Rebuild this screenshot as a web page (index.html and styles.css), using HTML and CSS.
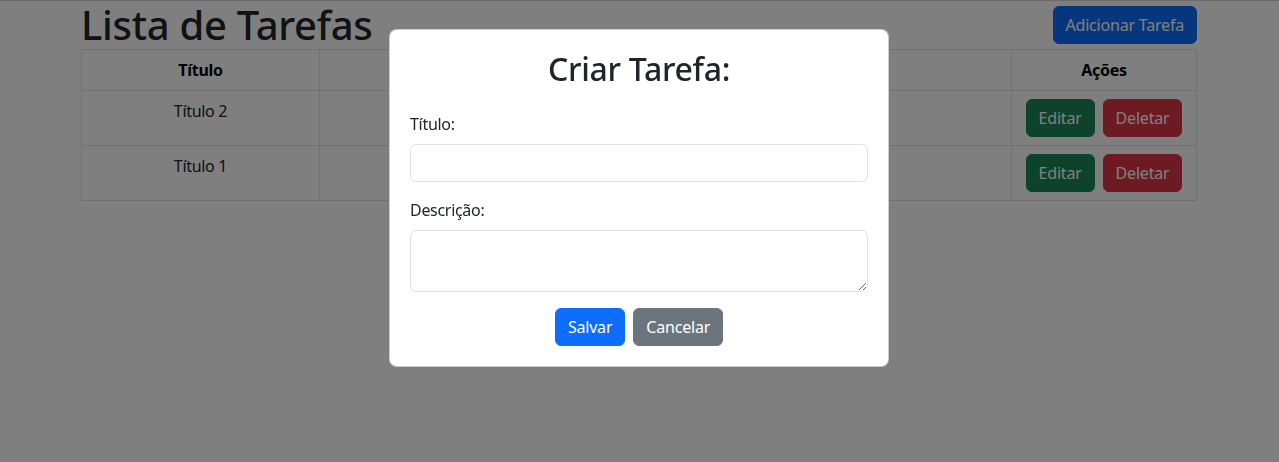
FILE: index.html
```html
<!DOCTYPE html>
<html lang="pt-BR">
<head>
<meta charset="utf-8">
<title>Lista de Tarefas</title>
<link rel="stylesheet" href="styles.css">
</head>
<body>
<div class="page">
  <div class="container">
    <div class="header">
      <h1 class="title">Lista de Tarefas</h1>
      <button class="btn btn-primary">Adicionar Tarefa</button>
    </div>
    <table class="tasks">
      <thead>
        <tr>
          <th class="col-title">Título</th>
          <th class="col-desc">Descrição</th>
          <th class="col-actions">Ações</th>
        </tr>
      </thead>
      <tbody>
        <tr>
          <td>Título 2</td>
          <td>Descrição 2</td>
          <td class="actions"><button class="btn btn-success">Editar</button><button class="btn btn-danger">Deletar</button></td>
        </tr>
        <tr>
          <td>Título 1</td>
          <td>Descrição 1</td>
          <td class="actions"><button class="btn btn-success">Editar</button><button class="btn btn-danger">Deletar</button></td>
        </tr>
      </tbody>
    </table>
  </div>
</div>
<div class="overlay">
  <div class="modal">
    <h2 class="modal-title">Criar Tarefa:</h2>
    <div class="field">
      <label class="label" for="titulo">Título:</label>
      <input class="control" id="titulo" type="text">
    </div>
    <div class="field">
      <label class="label" for="descricao">Descrição:</label>
      <textarea class="control area" id="descricao" rows="2"></textarea>
    </div>
    <div class="modal-actions">
      <button class="btn btn-primary">Salvar</button>
      <button class="btn btn-secondary">Cancelar</button>
    </div>
  </div>
</div>
</body>
</html>
```
FILE: styles.css
```css
* { box-sizing: border-box; }
html, body { margin: 0; padding: 0; }
body {
  font-family: "Noto Sans", "Open Sans", sans-serif;
  font-size: 16px;
  line-height: 1.5;
  color: #212529;
  background: #fff;
  width: 1279px;
  height: 462px;
  overflow: hidden;
}
.page {
  border-top: 1px solid #d4d4d4;
  padding-right: 1px;
  height: 100%;
}
.container {
  width: 1140px;
  margin: 0 auto;
  padding: 0 12px;
}
.header {
  display: flex;
  justify-content: space-between;
  align-items: center;
  height: 48px;
}
.title {
  margin: 0;
  font-size: 40px;
  font-weight: 500;
  line-height: 48px;
  letter-spacing: -0.3px;
}
.btn {
  font-family: inherit;
  font-size: 16px;
  line-height: 24px;
  padding: 6px 12px;
  border: 1px solid transparent;
  border-radius: 6px;
  color: #fff;
  cursor: pointer;
  letter-spacing: -0.2px;
}
.btn-primary { background: #0d6efd; border-color: #0d6efd; }
.btn-success { background: #198754; border-color: #198754; }
.btn-danger { background: #dc3545; border-color: #dc3545; }
.btn-secondary { background: #6c757d; border-color: #6c757d; }

.tasks {
  width: 1116px;
  border-collapse: collapse;
  text-align: center;
}
.tasks th, .tasks td {
  border: 1px solid #dee2e6;
  padding: 8px;
  vertical-align: top;
  letter-spacing: -0.3px;
}
.tasks th { color: #000; font-weight: 700; }
.col-title { width: 238px; }
.col-actions { width: 185px; }
.actions {
  white-space: nowrap;
}
.actions .btn + .btn { margin-left: 8px; }

.overlay {
  position: fixed;
  inset: 0;
  background: rgba(0, 0, 0, 0.5);
  display: flex;
  justify-content: center;
  align-items: flex-start;
  padding-right: 1px;
}
.modal {
  margin-top: 29px;
  width: 500px;
  background: #fff;
  border: 1px solid rgba(0, 0, 0, 0.2);
  border-radius: 8px;
  padding: 20px 20px;
  display: flex;
  flex-direction: column;
}
.modal-title {
  margin: 0 0 8px;
  text-align: center;
  font-size: 32px;
  font-weight: 500;
  line-height: 38.4px;
  letter-spacing: -0.3px;
}
.field {
  display: flex;
  flex-direction: column;
  margin-top: 16px;
}
.label {
  line-height: 24px;
  margin-bottom: 8px;
  letter-spacing: -0.3px;
}
.control {
  display: block;
  width: 100%;
  height: 38px;
  padding: 6px 12px;
  font-family: inherit;
  font-size: 16px;
  line-height: 24px;
  border: 1px solid #dee2e6;
  border-radius: 6px;
  background: #fff;
  color: #212529;
}
.area {
  height: 62px;
  resize: vertical;
}
.modal-actions {
  display: flex;
  justify-content: center;
  gap: 8px;
  margin-top: 16px;
}
```
